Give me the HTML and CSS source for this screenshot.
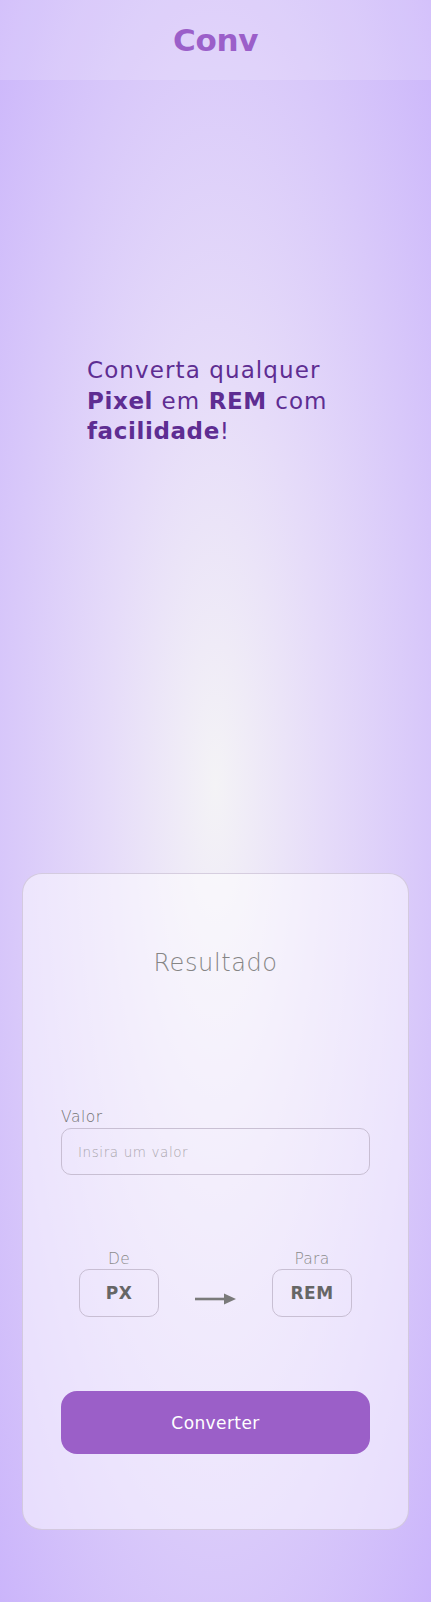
FILE: index.html
```html
<!DOCTYPE html>
<html lang="pt-BR">
<head>
<meta charset="utf-8">
<title>Conv</title>
<link rel="stylesheet" href="styles.css">
</head>
<body>
<header class="topbar">
  <h1 class="logo">Conv</h1>
</header>
<main class="main">
  <section class="hero">
    <p class="hero-text">Converta qualquer<br><strong>Pixel</strong> em <strong>REM</strong> com<br><strong>facilidade</strong>!</p>
  </section>
  <section class="card">
    <h2 class="result-title">Resultado</h2>
    <div class="result-area"></div>
    <label class="field-label" for="valor">Valor</label>
    <input class="field-input" id="valor" type="text" placeholder="Insira um valor">
    <div class="units">
      <div class="unit">
        <span class="unit-label">De</span>
        <div class="unit-box">PX</div>
      </div>
      <svg class="arrow" width="42" height="14" viewBox="0 0 42 14" aria-hidden="true">
        <line x1="0" y1="7" x2="30" y2="7" stroke="#7a7a7a" stroke-width="2.6"/>
        <polygon points="29,1.5 41,7 29,12.5" fill="#7a7a7a"/>
      </svg>
      <div class="unit">
        <span class="unit-label">Para</span>
        <div class="unit-box">REM</div>
      </div>
    </div>
    <button class="convert-btn" type="button">Converter</button>
  </section>
</main>
</body>
</html>
```
FILE: styles.css
```css
* { box-sizing: border-box; }

html, body {
  margin: 0;
  padding: 0;
}

body {
  min-height: 1602px;
  font-family: "DejaVu Sans", "Noto Sans", sans-serif;
  background: radial-gradient(ellipse farthest-corner at 50% 49%, #f4f3f6 0%, #e6dcf9 35%, #cbb5fb 100%);
}

.topbar {
  height: 80px;
  display: flex;
  align-items: center;
  justify-content: center;
  background: rgba(255, 255, 255, 0.16);
}

.logo {
  margin: 0;
  font-size: 31px;
  font-weight: 700;
  color: #9b5fc9;
  letter-spacing: -0.3px;
}

.main {
  display: flex;
  flex-direction: column;
  padding: 0 22px 72px;
}

.hero {
  padding: 275px 0 0 65px;
  height: 793px;
}

.hero-text {
  margin: 0;
  font-size: 23px;
  line-height: 30.5px;
  letter-spacing: 1.1px;
  color: #5e2d92;
}

.hero-text strong {
  font-weight: 700;
  letter-spacing: 0.6px;
}

.card {
  display: flex;
  flex-direction: column;
  padding: 74px 38px 75px;
  border: 1px solid rgba(205, 195, 215, 0.8);
  border-radius: 20px;
  background: rgba(255, 255, 255, 0.5);
}

.result-title {
  margin: 0;
  text-align: center;
  font-size: 24px;
  font-weight: 200;
  line-height: 30px;
  letter-spacing: 0.6px;
  color: #858585;
}

.result-area {
  height: 129px;
}

.field-label {
  font-size: 15.5px;
  line-height: 20px;
  letter-spacing: 0.5px;
  color: #747474;
  font-weight: 300;
}

.field-input {
  margin-top: 1px;
  height: 47px;
  width: 100%;
  padding: 0 16px;
  border: 1px solid rgba(190, 180, 200, 0.8);
  border-radius: 10px;
  background: transparent;
  font-family: inherit;
  font-size: 13.5px;
  letter-spacing: 0.6px;
  color: #555;
  outline: none;
}

.field-input::placeholder {
  color: #aaa6ad;
  font-weight: 300;
}

.units {
  margin-top: 74px;
  display: flex;
  align-items: flex-end;
  justify-content: space-between;
  padding: 0 18px;
}

.unit {
  display: flex;
  flex-direction: column;
  align-items: center;
}

.unit-label {
  font-size: 15.5px;
  line-height: 20px;
  letter-spacing: 0.3px;
  color: #8a8a8a;
  font-weight: 300;
}

.unit-box {
  width: 80px;
  height: 48px;
  display: flex;
  align-items: center;
  justify-content: center;
  border: 1px solid rgba(190, 180, 200, 0.8);
  border-radius: 10px;
  font-size: 17px;
  font-weight: 700;
  letter-spacing: 0.5px;
  color: #666;
}

.arrow {
  margin-bottom: 11px;
}

.convert-btn {
  margin-top: 74px;
  height: 63px;
  width: 100%;
  border: none;
  border-radius: 16px;
  background: #9b5fc8;
  color: #fff;
  font-family: inherit;
  font-size: 17px;
  letter-spacing: 0.4px;
  cursor: pointer;
}
```
